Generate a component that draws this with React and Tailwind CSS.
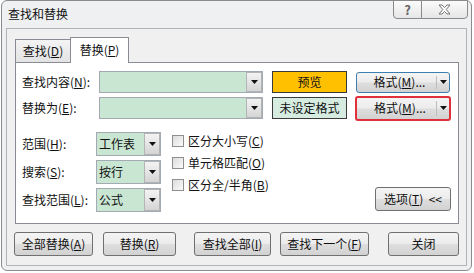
import React from "react";

const btnBg =
  "bg-[linear-gradient(#f4f4f4,#ececec_48%,#dedede_52%,#d2d2d2)]";

function Tri() {
  return (
    <svg width="7" height="4" viewBox="0 0 7 4">
      <polygon points="0,0 7,0 3.5,4" fill="#111" />
    </svg>
  );
}

function Combo({ w, h, text }) {
  return (
    <div
      className={`flex border border-[#a3aab3] bg-[#c9e6d3] ${w} ${h}`}
    >
      <div className="flex-1 flex items-center pl-[2px] text-[12px] leading-none text-[#111]">
        {text}
      </div>
      <div className="w-[16px] my-[0px] border border-[#b4b4b4] bg-[linear-gradient(#f3f3f3,#e4e4e4_50%,#d4d4d4)] flex items-center justify-center">
        <Tri />
      </div>
    </div>
  );
}

function Btn({ w, ml = "", children, extra = "" }) {
  return (
    <div
      className={`h-[24px] ${w} ${ml} rounded-[3px] border border-[#707070] ${btnBg} flex items-center justify-center text-[12px] leading-none text-[#111] ${extra}`}
    >
      {children}
    </div>
  );
}

function Check({ children }) {
  return (
    <div className="h-[22px] flex items-center">
      <div className="w-[12px] h-[12px] border border-[#8f8f8f] bg-[linear-gradient(135deg,#dcdcdc,#fafafa)]" />
      <span className="ml-[4px] text-[12px] leading-none text-[#111]">
        {children}
      </span>
    </div>
  );
}

function FormatBtn({ border, w, h, ml, extra = "" }) {
  return (
    <div
      className={`${w} ${h} ${ml} rounded-[3px] ${border} ${btnBg} flex items-center text-[12px] leading-none text-[#111] ${extra}`}
    >
      <div className="flex-1 text-center pl-[6px]">
        格式(<u>M</u>)...
      </div>
      <div className="w-px self-stretch my-[3px] bg-[#bdbdbd]" />
      <div className="w-[12px] flex items-center justify-center">
        <Tri />
      </div>
    </div>
  );
}

export default function App() {
  return (
    <div className="w-[474px] h-[273px] bg-white font-['Noto_Sans_CJK_SC','Microsoft_YaHei',sans-serif]">
      <div className="ml-[1px] w-[471px] h-[271px] border border-[#8c8c8c] rounded-[6px] bg-[#eef0f2] flex flex-col">
        {/* title bar */}
        <div className="h-[27px] flex justify-between">
          <div className="pl-[6px] pt-[7px] text-[12px] leading-none text-[#111]">
            查找和替换
          </div>
          <div className="flex mr-[3px] -mt-[1px] items-start">
            <div className="w-[29px] h-[19px] border border-[#8a8a8a] rounded-bl-[4px] bg-[linear-gradient(#fbfbfb,#e6e6e6)] flex items-center justify-center text-[13px] leading-none font-bold text-[#666]">
              ?
            </div>
            <div className="w-[47px] h-[19px] -ml-px border border-[#8a8a8a] rounded-br-[4px] bg-[linear-gradient(#fbfbfb,#e6e6e6)] flex items-center justify-center">
              <svg width="13" height="11" viewBox="0 0 13 11">
                <path
                  d="M1 1 H4 L6.5 3.6 L9 1 H12 L8.2 5.5 L12 10 H9 L6.5 7.4 L4 10 H1 L4.8 5.5 Z"
                  fill="#fff"
                  stroke="#666"
                  strokeWidth="0.9"
                  strokeLinejoin="round"
                />
              </svg>
            </div>
          </div>
        </div>

        {/* client */}
        <div className="mx-[4px] mb-[4px] flex-1 border border-[#b3b3b3] bg-[#f0f0f0] pl-[8px] pt-[8px] flex flex-col">
          {/* tabs */}
          <div className="flex items-end h-[25px]">
            <div className="w-[56px] h-[23px] border border-b-0 border-[#898c95] bg-[linear-gradient(#f4f4f4,#e3e3e3)] flex items-center justify-center text-[12px] leading-none text-[#111]">
              查找(<u>D</u>)
            </div>
            <div className="relative z-10 -ml-px -mb-px w-[59px] h-[26px] border border-b-0 border-[#898c95] bg-white flex items-center justify-center pb-[2px] text-[12px] leading-none text-[#111]">
              替换(<u>P</u>)
            </div>
          </div>

          {/* panel */}
          <div className="w-[444px] h-[162px] border border-[#898c95] bg-white pt-[8px] pl-[6px] flex flex-col">
            <div className="flex items-center h-[22px]">
              <div className="w-[77px] text-[12px] leading-none text-[#111]">
                查找内容(<u>N</u>):
              </div>
              <Combo w="w-[164px]" h="h-[22px]" text="" />
              <div className="ml-[9px] w-[75px] h-[22px] border border-[#3a3a3a] bg-[#ffc000] flex items-center justify-center text-[12px] leading-none text-[#111]">
                预览
              </div>
              <FormatBtn
                border="border border-[#3c7fb1]"
                w="w-[94px]"
                h="h-[21px]"
                ml="ml-[9px]"
              />
            </div>
            <div className="flex items-center h-[22px] mt-[4px]">
              <div className="w-[77px] text-[12px] leading-none text-[#111]">
                替换为(<u>E</u>):
              </div>
              <Combo w="w-[164px]" h="h-[22px]" text="" />
              <div className="ml-[9px] w-[75px] h-[22px] border border-[#3a3a3a] bg-[#d6ece1] flex items-center justify-center text-[12px] leading-none text-[#111]">
                未设定格式
              </div>
              <FormatBtn
                border="border-2 border-[#e0303a]"
                w="w-[96px]"
                h="h-[25px]"
                ml="ml-[8px]"
                extra="pl-[1px]"
              />
            </div>

            {/* lower */}
            <div className="flex mt-[11px]">
              <div className="pt-[2px] flex flex-col gap-[4px]">
                {[
                  ["范围", "H", "工作表"],
                  ["搜索", "S", "按行"],
                  ["查找范围", "L", "公式"],
                ].map(([l, k, v]) => (
                  <div key={k} className="flex items-center h-[24px]">
                    <div className="w-[74px] text-[12px] leading-none text-[#111]">
                      {l}(<u>{k}</u>):
                    </div>
                    <Combo w="w-[65px]" h="h-[24px]" text={v} />
                  </div>
                ))}
              </div>
              <div className="ml-[11px] flex flex-col">
                <Check>
                  区分大小写(<u>C</u>)
                </Check>
                <Check>
                  单元格匹配(<u>O</u>)
                </Check>
                <Check>
                  区分全/半角(<u>B</u>)
                </Check>
              </div>
              <div className="flex-1" />
              <div className="self-end mb-[1px] mr-[7px]">
                <Btn w="w-[76px]">
                  选项(<u>T</u>)&nbsp;&nbsp;&lt;&lt;
                </Btn>
              </div>
            </div>
          </div>

          {/* bottom buttons */}
          <div className="flex mt-[8px] -ml-px">
            <Btn w="w-[79px]">
              全部替换(<u>A</u>)
            </Btn>
            <Btn w="w-[73px]" ml="ml-[10px]">
              替换(<u>R</u>)
            </Btn>
            <Btn w="w-[77px]" ml="ml-[18px]">
              查找全部(<u>I</u>)
            </Btn>
            <Btn w="w-[89px]" ml="ml-[9px]">
              查找下一个(<u>F</u>)
            </Btn>
            <Btn w="w-[71px]" ml="ml-[19px]">
              关闭
            </Btn>
          </div>
        </div>
      </div>
    </div>
  );
}
